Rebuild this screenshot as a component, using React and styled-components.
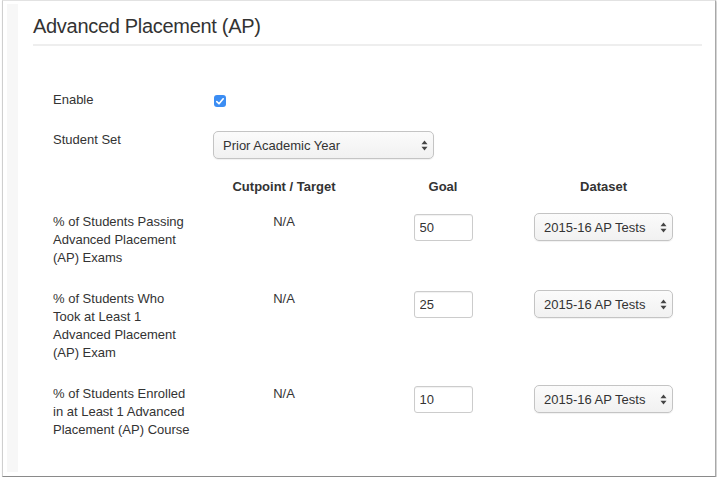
import React from 'react';
import styled, { createGlobalStyle } from 'styled-components';

const GlobalStyle = createGlobalStyle`
    html, body {
        margin: 0;
        padding: 0;
        background: #ffffff;
    }
    body {
        font-family: 'Liberation Sans', Arial, sans-serif;
        color: #333333;
    }
`

const metrics = [
    { label: '% of Students Passing Advanced Placement (AP) Exams', goal: '50' },
    { label: '% of Students Who Took at Least 1 Advanced Placement (AP) Exam', goal: '25' },
    { label: '% of Students Enrolled in at Least 1 Advanced Placement (AP) Course', goal: '10' },
];

const Arrows = () => (
    <ArrowIcon width="7" height="11" viewBox="0 0 7 11">
        <path d="M3.5 0.5 L6.5 4.2 L0.5 4.2 Z" fill="#444" />
        <path d="M3.5 10.5 L6.5 6.8 L0.5 6.8 Z" fill="#444" />
    </ArrowIcon>
)

const Select = ({ value, width }) => (
    <SelectWrap $width={width}>
        <SelectBox defaultValue={value}>
            <option>{value}</option>
        </SelectBox>
        <Arrows />
    </SelectWrap>
)

const App = () => {
    return (
        <>
            <GlobalStyle />
            <Frame>
                <SideStrip />
                <Content>
                    <Title>Advanced Placement (AP)</Title>
                    <Divider />
                    <Row $top={45}>
                        <Label>Enable</Label>
                        <Check>
                            <svg width="8" height="7" viewBox="0 0 8 7">
                                <path d="M0.8 3.6 L3 5.8 L7.2 0.8" fill="none" stroke="#fff" strokeWidth="1.6" strokeLinecap="round" strokeLinejoin="round" />
                            </svg>
                        </Check>
                    </Row>
                    <Row $top={22}>
                        <Label>Student Set</Label>
                        <Span3>
                            <Select value="Prior Academic Year" width={221} />
                        </Span3>
                    </Row>
                    <Row $top={19}>
                        <span />
                        <Header>Cutpoint / Target</Header>
                        <Header>Goal</Header>
                        <Header>Dataset</Header>
                    </Row>
                    {metrics.map((m, i) => (
                        <Row key={i} $top={i === 0 ? 17 : 23}>
                            <Label>{m.label}</Label>
                            <Cell>N/A</Cell>
                            <Cell>
                                <GoalInput type="text" defaultValue={m.goal} />
                            </Cell>
                            <Cell>
                                <Select value="2015-16 AP Tests" width={139} />
                            </Cell>
                        </Row>
                    ))}
                </Content>
            </Frame>
        </>
    )
}

export default App;

const Frame = styled.div`
    box-sizing: border-box;
    margin-left: 2px;
    width: 714px;
    height: 477px;
    display: flex;
    background: #fff;
    border-top: 1px solid #e2e2e2;
    border-left: 1px solid #cfcfcf;
    border-right: 1px solid #a8a8a8;
    border-bottom: 1px solid #8a8a8a;
    box-shadow: 1px 1px 2px rgba(0, 0, 0, 0.25);
`

const SideStrip = styled.div`
    flex: 0 0 11px;
    margin: 3px 0 4px 4px;
    background: #f7f7f7;
`

const Content = styled.div`
    flex: 1;
    padding: 0 13px 0 15px;
`

const Title = styled.h2`
    margin: 0;
    padding-top: 12px;
    font-size: 20px;
    letter-spacing: -0.3px;
    font-weight: normal;
    line-height: 26px;
    color: #333;
`

const Divider = styled.div`
    margin-top: 5px;
    height: 2px;
    background: #eeeeee;
`

const Row = styled.div`
    display: grid;
    grid-template-columns: 160px 142px 176px 145px;
    align-items: start;
    margin-top: ${props => props.$top}px;
    padding-left: 20px;
    font-size: 13px;
    line-height: 18px;
`

const Label = styled.div`
    width: 140px;
    color: #333;
`

const Span3 = styled.div`
    grid-column: 2 / span 3;
`

const Header = styled.div`
    text-align: center;
    font-weight: bold;
    color: #333;
`

const Cell = styled.div`
    display: flex;
    justify-content: center;
    color: #333;
`

const Check = styled.span`
    margin-top: 4px;
    margin-left: 1px;
    width: 12px;
    height: 12px;
    border-radius: 3px;
    background: #3b8df3;
    display: flex;
    align-items: center;
    justify-content: center;
`

const SelectWrap = styled.div`
    position: relative;
    width: ${props => props.$width}px;
    height: 28px;
`

const SelectBox = styled.select`
    appearance: none;
    -webkit-appearance: none;
    box-sizing: border-box;
    width: 100%;
    height: 100%;
    margin: 0;
    padding: 0 20px 0 9px;
    border: 1px solid #c4c4c4;
    border-radius: 5px;
    background: linear-gradient(#fbfbfb, #f1f1f1);
    font-family: 'Liberation Sans', Arial, sans-serif;
    font-size: 13px;
    color: #333;
    box-shadow: 0 1px 1px rgba(0, 0, 0, 0.06);
`

const ArrowIcon = styled.svg`
    position: absolute;
    right: 6px;
    top: 9px;
    pointer-events: none;
`

const GoalInput = styled.input`
    box-sizing: border-box;
    width: 59px;
    height: 27px;
    margin: 1px 0 0;
    padding: 0 5px;
    border: 1px solid #cccccc;
    border-radius: 3px;
    font-family: 'Liberation Sans', Arial, sans-serif;
    font-size: 13px;
    color: #333;
    box-shadow: inset 0 1px 1px rgba(0, 0, 0, 0.06);
    outline: none;
`
